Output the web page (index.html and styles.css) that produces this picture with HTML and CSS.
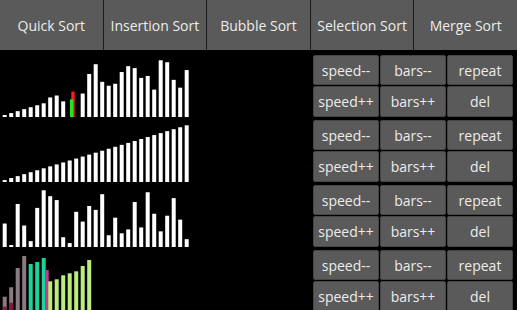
FILE: index.html
```html
<!DOCTYPE html>
<html lang="en">
<head>
  <meta charset="UTF-8">
  <title>Sorting</title>
  <link rel="stylesheet" href="styles.css">
</head>
<body>

  <div class="menu">
    <button>Quick Sort</button>
    <button>Insertion Sort</button>
    <button>Bubble Sort</button>
    <button>Selection Sort</button>
    <button>Merge Sort</button>
  </div>

  <div class="panels">
    <div class="panel">
      <svg class="chart" id="chart0" width="313" height="62" viewBox="0 0 313 62"></svg>
      <div class="controls">
        <button>speed--</button><button>bars--</button><button>repeat</button>
        <button>speed++</button><button>bars++</button><button>del</button>
      </div>
    </div>
    <div class="panel">
      <svg class="chart" id="chart1" width="313" height="62" viewBox="0 0 313 62"></svg>
      <div class="controls">
        <button>speed--</button><button>bars--</button><button>repeat</button>
        <button>speed++</button><button>bars++</button><button>del</button>
      </div>
    </div>
    <div class="panel">
      <svg class="chart" id="chart2" width="313" height="62" viewBox="0 0 313 62"></svg>
      <div class="controls">
        <button>speed--</button><button>bars--</button><button>repeat</button>
        <button>speed++</button><button>bars++</button><button>del</button>
      </div>
    </div>
    <div class="panel">
      <svg class="chart" id="chart3" width="313" height="62" viewBox="0 0 313 62"></svg>
      <div class="controls">
        <button>speed--</button><button>bars--</button><button>repeat</button>
        <button>speed++</button><button>bars++</button><button>del</button>
      </div>
    </div>
  </div>

  <script>
    const UNIT = 1.955;
    const STEP = 6.5;
    const LEFT = 2.7;
    const H = 62;

    // barras: [posicion (x o indice), altura, color, ancho]
    function bar(svg, x, h, color, w) {
      const r = document.createElementNS('http://www.w3.org/2000/svg', 'rect');
      r.setAttribute('x', x);
      r.setAttribute('y', H - h);
      r.setAttribute('width', w || 4);
      r.setAttribute('height', h);
      r.setAttribute('fill', color);
      svg.appendChild(r);
    }

    function ranks(id, list) {
      const svg = document.getElementById(id);
      list.forEach((v, i) => {
        if (v) bar(svg, LEFT + i * STEP, v * UNIT, '#fff');
      });
      return svg;
    }

    // quick sort (con dos barras en movimiento)
    const q = ranks('chart0', [1,2,3,4,5,6,7,10,11,8,0,0,12,22,27,18,16,17,23,26,25,20,21,14,29,28,19,15,24]);
    bar(q, 71.3, 13 * UNIT, '#ff1a1a', 3.4);
    bar(q, 70, 9 * UNIT, '#22e622', 3.3);

    // insertion sort, ya ordenado
    ranks('chart1', Array.from({length: 29}, (_, i) => i + 1));

    // bubble sort
    ranks('chart2', [12,1,22,11,3,20,29,26,24,5,2,18,13,21,19,27,6,15,7,9,23,10,28,17,8,16,25,14,4]);

    // merge sort
    const m = document.getElementById('chart3');
    const merge = [
      [15.3, '#8c7a82'], [24.7, '#8c7a82'], [44, '#8c7a82'], [56, '#8c7a82'],
      [48, '#1ad49c'], [50, '#1ad49c'], [54, '#1ad49c']
    ];
    merge.forEach((b, i) => bar(m, LEFT + i * STEP, b[0], b[1]));
    bar(m, LEFT, 5.3, '#7c1c40');
    bar(m, LEFT + STEP, 9.3, '#7c1c40');
    bar(m, 45.3, 42, '#c43c90', 3.4);
    [30.7, 32.7, 36.7, 38.7, 40.7, 46, 52].forEach((h, i) => {
      bar(m, LEFT + (i + 7) * STEP, h, '#bcec7c');
    });
  </script>
</body>
</html>
```

FILE: styles.css
```css
html, body {
  overflow: hidden;
}
body {
  margin: 0;
  background: #000;
  font-family: 'Open Sans', 'Noto Sans', sans-serif;
}
button {
  font-family: inherit;
  color: #ececec;
  background-color: #5a5a5a;
  padding: 0;
  cursor: pointer;
}
/* barra de algoritmos */
.menu {
  display: flex;
  gap: 1px;
  height: 50px;
  background: #1c1c1c;
}
.menu button {
  flex: 1;
  border: none;
  font-size: 14px;
}
.panels {
  display: flex;
  flex-direction: column;
  gap: 3px;
  padding-top: 5px;
}
.panel {
  display: flex;
  height: 62px;
}
.chart {
  display: block;
  flex: none;
}
.controls {
  display: grid;
  grid-template-columns: repeat(3, 66px);
  grid-template-rows: 30px 31px;
  gap: 1px;
  margin-left: auto;
  margin-right: 4px;
}
.controls button {
  border: 1px solid #464646;
  border-radius: 2px;
  font-size: 14px;
}
```
